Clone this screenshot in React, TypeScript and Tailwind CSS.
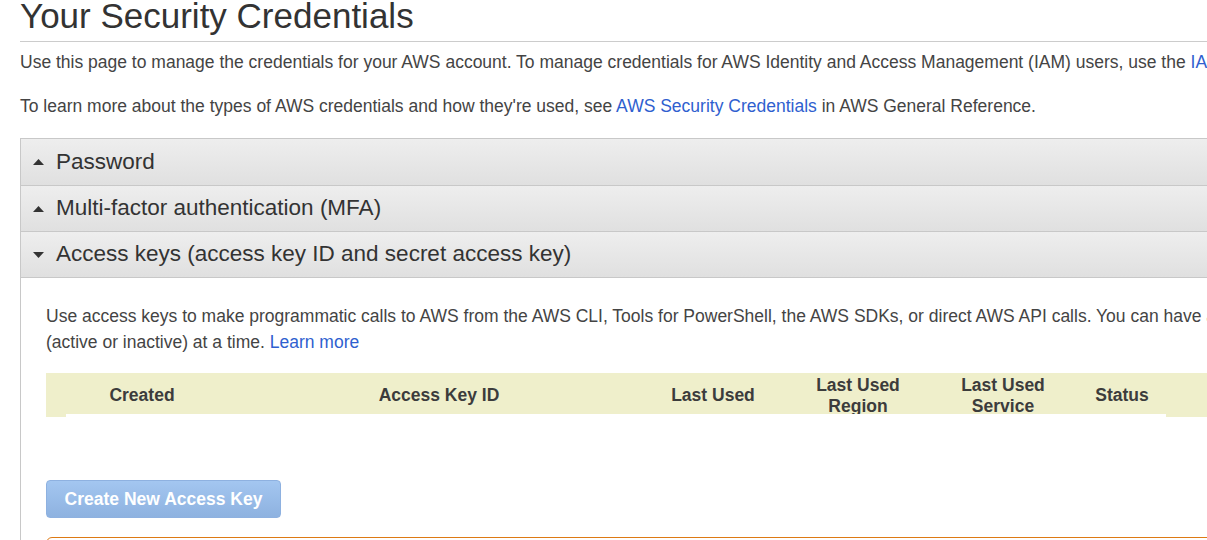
import React from 'react';

const Triangle: React.FC<{ up?: boolean }> = ({ up }) => (
  <svg width="11" height="6" viewBox="0 0 11 6" className="shrink-0">
    {up ? <polygon points="0,6 5.5,0 11,6" fill="#333" /> : <polygon points="0,0 11,0 5.5,6" fill="#333" />}
  </svg>
);

const sections = [
  { title: 'Password', open: false, h: 'h-[47px]' },
  { title: 'Multi-factor authentication (MFA)', open: false, h: 'h-[46px]' },
  { title: 'Access keys (access key ID and secret access key)', open: true, h: 'h-[47px] border-b' },
];

const columns = [
  { label: 'Created', w: 'w-[192px]' },
  { label: 'Access Key ID', w: 'w-[402px]' },
  { label: 'Last Used', w: 'w-[146px]' },
  { label: 'Last Used Region', w: 'w-[144px]' },
  { label: 'Last Used Service', w: 'w-[146px]' },
  { label: 'Status', w: 'w-[92px]' },
];

const App: React.FC = () => {
  return (
    <div className="w-[1207px] h-[540px] overflow-hidden bg-white font-['Liberation_Sans',Arial,sans-serif] text-[#444]">
      <div className="w-[1700px] pl-5">
        {/* Page title */}
        <div className="h-[41px]">
          <h1 className="text-[35px] leading-[32px] text-[#333]">Your Security Credentials</h1>
        </div>
        <div className="h-px bg-[#cccccc]" />

        <p className="mt-[10px] text-[17.5px] leading-[20px]">
          Use this page to manage the credentials for your AWS account. To manage credentials for AWS Identity and Access
          Management (IAM) users, use the <span className="text-[#2f5fcf]">IAM Console</span>.
        </p>
        <p className="mt-[24px] text-[17.5px] leading-[20px]">
          To learn more about the types of AWS credentials and how they're used, see{' '}
          <span className="text-[#2f5fcf]">AWS Security Credentials</span> in AWS General Reference.
        </p>

        {/* Accordion */}
        <div className="mt-[22px] border-l border-[#c8c8c8]">
          {sections.map((s) => (
            <div
              key={s.title}
              className={`${s.h} flex items-center gap-[12px] pl-[12px] border-t border-[#c8c8c8] bg-gradient-to-b from-[#eeeeee] to-[#e0e0e0]`}
            >
              <Triangle up={!s.open} />
              <span className="text-[22.5px] leading-none text-[#333]">{s.title}</span>
            </div>
          ))}

          <div className="pl-[25px] pt-[25px] pb-[40px]">
            <p className="text-[17.5px] leading-[26px]">
              Use access keys to make programmatic calls to AWS from the AWS CLI, Tools for PowerShell, the AWS SDKs, or
              direct AWS API calls. You can have a maximum of two access keys
              <br />
              (active or inactive) at a time. <span className="text-[#2f5fcf]">Learn more</span>
            </p>

            {/* Table header */}
            <div className="mt-[18px] w-[1500px]">
              <div className="h-[41px] flex bg-[#efefcb] overflow-hidden">
                {columns.map((c) => (
                  <div
                    key={c.label}
                    className={`${c.w} shrink-0 flex items-center justify-center text-center pt-[4px] text-[17.5px] leading-[21px] font-bold text-[#3c3c3c] px-[28px]`}
                  >
                    {c.label}
                  </div>
                ))}
              </div>
              <div className="h-[3px] flex bg-[#efefcb]">
                <div className="ml-[20px] w-[1100px] bg-white" />
              </div>
            </div>

            <button className="mt-[63px] h-[38px] w-[235px] rounded-[4px] border border-[#8eb1e0] bg-gradient-to-b from-[#a3c6f0] to-[#8eb2e0] text-white text-[17.5px] font-bold">
              Create New Access Key
            </button>

            <div className="mt-[19px] h-[60px] w-[1400px] rounded-[6px] border border-[#dd7a14]" />
          </div>
        </div>
      </div>
    </div>
  );
};

export default App;
